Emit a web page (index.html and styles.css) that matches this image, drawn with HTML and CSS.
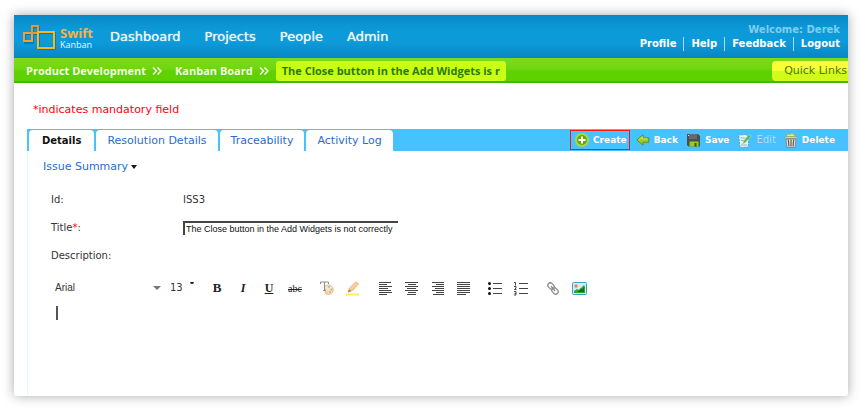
FILE: index.html
```html
<!DOCTYPE html>
<html lang="en">
<head>
<meta charset="utf-8">
<title>Swift Kanban</title>
<link rel="stylesheet" href="styles.css">
</head>
<body>
<div class="window">
  <header class="header">
    <a class="logo" href="#">
      <svg class="logo-mark" width="34" height="26" viewBox="0 0 34 26" fill="none" stroke-width="2">
        <g stroke="#06679f" opacity=".6"><path d="M3 10h8v9H3zM11 3h6v7h-6zM17 9h16v16H17z"/></g>
        <path d="M2 9h8v8H2z" stroke="#f3a02c"/>
        <path d="M10 2h6v7h-6z" stroke="#e9962f"/>
        <path d="M16 8h16v16H16z" stroke="#fbb617"/>
      </svg>
      <span class="logo-text"><b>Swift</b><span>Kanban</span></span>
    </a>
    <nav class="nav"><a href="#">Dashboard</a><a href="#">Projects</a><a href="#">People</a><a href="#">Admin</a></nav>
    <div class="account">
      <span class="welcome">Welcome: Derek</span>
      <div class="account-links"><a href="#">Profile</a><a href="#">Help</a><a href="#">Feedback</a><a href="#">Logout</a></div>
    </div>
  </header>

  <div class="crumbs">
    <a href="#">Product Development</a>
    <svg class="chevrons" width="10" height="8" viewBox="0 0 10 8"><path d="M1 .5 4.500 4 1 7.500M5.500 .5 9 4 5.500 7.500"/></svg>
    <a href="#">Kanban Board</a>
    <svg class="chevrons" width="10" height="8" viewBox="0 0 10 8"><path d="M1 .5 4.500 4 1 7.500M5.500 .5 9 4 5.500 7.500"/></svg>
    <span class="current">The Close button in the Add Widgets is r</span>
    <button class="quick" type="button">Quick Links</button>
  </div>

  <main class="main">
    <p class="mandatory">*indicates mandatory field</p>
    <div class="bar">
      <nav class="tabs"><a class="tab active" href="#">Details</a><a class="tab" href="#">Resolution Details</a><a class="tab" href="#">Traceability</a><a class="tab" href="#">Activity Log</a></nav>
      <div class="actions">
        <button class="action create" type="button">
          <svg width="14" height="14" viewBox="0 0 14 14"><circle cx="7" cy="7" r="7" fill="#a8d840"/><circle cx="7" cy="7" r="5" fill="#66a80c"/><path d="M7 3.500v7M3.500 7h7" stroke="#fff" stroke-width="2"/></svg>Create</button>
        <button class="action" type="button">
          <svg width="14" height="14" viewBox="0 0 16 14"><path d="M1 7 8 1v3.500h6.500v5H8V13z" fill="#9fce1c" stroke="#5f8422"/><path d="M3 7 7.200 3.400v2.400H13" fill="none" stroke="#d5ee6a"/></svg>Back</button>
        <button class="action" type="button">
          <svg width="15" height="14" viewBox="0 0 15 14"><path d="M1 1h11l2 2v10.500H2.500L1 12z" fill="#4b4e54"/><path d="M3 1h8v5H3z" fill="#66696f"/><path d="M2 2h1v1H2z" fill="#ddd"/><path d="M3.500 8.500h9v5h-9z" fill="#8fd11b"/><path d="M8.500 10h2v3.500h-2z" fill="#395019"/></svg>Save</button>
        <button class="action" type="button" disabled>
          <svg width="15" height="15" viewBox="0 0 15 15"><path d="M1.500 2 9 1.500l2.500 3V14L3 14.500z" fill="#e4f3f8" stroke="#5e9fb8" stroke-dasharray="2 1"/><path d="M3.500 5h5M4 7.500h3M4 12h6" stroke="#84bacd"/><path d="M5.500 11 7 7.500l5-6 2 1.500-5.500 6.500z" fill="#65ad5c" stroke="#b9e2b2" stroke-width=".6"/></svg>Edit</button>
        <button class="action" type="button">
          <svg width="14" height="15" viewBox="0 0 14 15"><path d="M2.500 3.500 4 1l2 .8L8 .5l2 1.500 1.500 1.500z" fill="#eef27a" stroke="#aab63c" stroke-width=".6"/><path d="M1 4h12v1.500H1z" fill="#f2edbd" stroke="#8a8760" stroke-width=".5"/><path d="M2 6h10l-1 8.500H3z" fill="#e9e4dc" stroke="#75706b" stroke-width=".7"/><path d="M4.300 6.500 5 13.500M7 6.500v7M9.700 6.500 9 13.500" stroke="#605850" stroke-width="1.200"/></svg>Delete</button>
      </div>
    </div>

    <form class="panel">
      <button class="summary" type="button">Issue Summary <span class="caret"></span></button>
      <div class="fields">
        <span>Id:</span><output>ISS3</output>
        <label for="title">Title<em>*</em>:</label><input id="title" type="text" value="The Close button in the Add Widgets is not correctly">
        <label for="description">Description:</label>
      </div>
      <div class="toolbar">
        <span class="pick"><select class="face" aria-label="Font"><option>Arial</option></select></span>
        <select class="size" aria-label="Font size"><option>13</option></select>
        <span class="tick"></span>
        <div class="group">
          <button type="button" class="glyph bold">B</button><button type="button" class="glyph italic">I</button><button type="button" class="glyph under">U</button><button type="button" class="glyph strike">abc</button>
        </div>
        <div class="group">
          <button type="button" aria-label="Text colour"><svg width="14" height="14" viewBox="0 0 14 14"><path d="M5 5.500C8 2 13.500 5 13.300 9c-.2 4-5 5.500-7.500 3.500-1.800-1.500.5-2.500-.5-4S4 7 5 5.500z" fill="#f8e3c4" stroke="#d6ac82" stroke-width=".8"/><circle cx="9" cy="6" r="1.100" fill="#91c7e8"/><circle cx="11.500" cy="8.500" r="1.100" fill="#8ecf84"/><circle cx="10" cy="11" r="1.100" fill="#ee9d89"/><circle cx="7.200" cy="11.500" r="1" fill="#f1cd58"/><path d="M.5 3V1h8v2M4.500 1v8.500M3 9.500h3" fill="none" stroke="#8c8c8c"/></svg></button><button type="button" aria-label="Highlight"><svg width="14" height="15" viewBox="0 0 14 15"><path d="M0 12.500h13v2H0z" fill="#fcee62"/><path d="m2 11 1.500-4L10 .8l2.500 2L6.500 9.500z" fill="#f9cf9f" stroke="#e0a571" stroke-width=".8"/><path d="m2 11.500 1.200-3 2.300 1.600z" fill="#b78152"/></svg></button>
        </div>
        <div class="group">
          <button type="button" aria-label="Align left"><svg class="lines" width="13" height="15" viewBox="0 0 13 15"><path d="M0 1.500h12M0 3.500h8M0 5.500h13M0 7.500h9M0 9.500h12M0 11.500h13M0 13.500h8"/></svg></button><button type="button" aria-label="Centre"><svg class="lines" width="13" height="15" viewBox="0 0 13 15"><path d="M0 1.500h13M3 3.500h8M0 5.500h13M2 7.500h9M0 9.500h13M3 11.500h8M2 13.500h9"/></svg></button><button type="button" aria-label="Align right"><svg class="lines" width="13" height="15" viewBox="0 0 13 15"><path d="M1 1.500h12M5 3.500h8M1 5.500h12M4 7.500h9M1 9.500h12M5 11.500h8M2 13.500h11"/></svg></button><button type="button" aria-label="Justify"><svg class="lines" width="13" height="15" viewBox="0 0 13 15"><path d="M0 1.500h13M0 3.500h13M0 5.500h13M0 7.500h13M0 9.500h13M0 11.500h13M0 13.500h9"/></svg></button>
        </div>
        <div class="group">
          <button type="button" aria-label="Bulleted list"><svg class="lines" width="14" height="14" viewBox="0 0 14 14"><path d="M5 2.500h9M5 7.500h9M5 12.500h9"/><g fill="#111" stroke="none"><circle cx="1.500" cy="2.500" r="1.500"/><circle cx="1.500" cy="7.500" r="1.500"/><circle cx="1.500" cy="12.500" r="1.500"/></g></svg></button><button type="button" aria-label="Numbered list"><svg class="lines" width="14" height="15" viewBox="0 0 14 15"><path d="M5 2.500h9M5 7.500h9M5 12.500h9"/><path d="M0 1.500h1.500v3M0 5.500h2v1.500l-1.500 1.500h2M0 10.500h2v3.500H0M.5 12.500H2" fill="none"/></svg></button>
        </div>
        <div class="group">
          <button type="button" aria-label="Link"><svg width="12" height="13" viewBox="0 0 12 13" fill="none" stroke="#8d8d8d" stroke-width="1.300"><rect x="-2.500" y="-3.500" width="5" height="7" rx="2.500" transform="translate(4 4) rotate(-42)"/><rect x="-2.500" y="-3.500" width="5" height="7" rx="2.500" transform="translate(8 9) rotate(-42)"/><path d="m4 4 4 5"/></svg></button><button type="button" aria-label="Image"><svg width="15" height="13" viewBox="0 0 15 13"><rect x=".5" y=".5" width="14" height="12" rx="1" fill="#c8f2fb" stroke="#3d9fd0"/><path d="M2 11V9l3-2 2 1 5-5 1 2v6z" fill="#36a51f"/><path d="m6 10 3-4 1 2 2-3v5z" fill="#156c17"/><circle cx="4" cy="4" r="1.700" fill="#f48433"/></svg></button>
        </div>
      </div>
      <div class="editor"><textarea id="description"></textarea><span class="cursor"></span></div>
    </form>
  </main>
</div>
</body>
</html>
```
FILE: styles.css
```css
* { box-sizing: border-box; }
body {
  margin: 0;
  min-height: 100vh;
  padding: 15px 18px 16px 14px;
  display: flex;
  background: #fff;
  font: 10px/14px "DejaVu Sans", sans-serif;
  color: #333;
}
a { color: inherit; text-decoration: none; }
button { border: 0; padding: 0; background: none; font: inherit; color: inherit; }
svg { display: block; flex: none; }

.window {
  flex: 1;
  min-width: 0;
  display: flex;
  flex-direction: column;
  background: #fff;
  border-radius: 0 0 3px 3px;
  box-shadow: 0 0 12px rgba(0, 0, 0, .35);
}

.header {
  display: flex;
  align-items: center;
  height: 43px;
  padding: 0 8px;
  color: #e8f7ff;
  background: linear-gradient(#0789c8, #0d9ad8 35%, #0d9ad8 65%, #0785c4);
}
.logo { display: flex; align-items: center; gap: 4px; width: 88px; }
.logo-text { display: flex; flex-direction: column; padding-top: 2px; font: 9px/10px "Lato", sans-serif; }
.logo-text span { font-family: "Open Sans", sans-serif; }
.logo-text b { font: bold 13px/14px "Open Sans", sans-serif; color: #fbb040; }
.nav { display: flex; gap: 24px; font-size: 13px; text-shadow: 0 0 1px #e8f7ff; }
.account { margin-left: auto; text-align: right; font-weight: bold; }
.welcome { color: #7fcdf0; }
.account-links { display: flex; justify-content: flex-end; color: #fff; }
.account-links a + a { margin-left: 7px; padding-left: 7px; border-left: 1px solid #a9dcf3; }

.crumbs {
  display: flex;
  align-items: center;
  gap: 6px;
  height: 25px;
  padding-left: 12px;
  color: #f4ffe4;
  font: bold 11px/20px "Open Sans", sans-serif;
  background: linear-gradient(#7ddb1c, #6fd60e 45%, #5fd000 55%, #5fd000 90%, #46b800 92%);
}
.chevrons { margin-right: 7px; fill: none; stroke: #f4ffe4; stroke-width: 1.5; }
.chevrons + .current { margin-left: -6px; }
.current {
  width: 230px;
  height: 20px;
  padding: 0 6px;
  overflow: hidden;
  white-space: nowrap;
  border-radius: 3px;
  color: #2d7a00;
  background: #c8ff14;
}
.quick {
  margin-left: auto;
  height: 20px;
  padding: 0 1px 0 12px;
  border-radius: 4px 0 0 4px;
  color: #4a7a00;
  font: 11px "DejaVu Sans", sans-serif;
  background: linear-gradient(#f8ff35 50%, #d2fb18 50%);
}

.main { flex: 1; display: flex; flex-direction: column; padding-left: 13px; }
.mandatory { margin: 20px 0 12px 6px; color: #f00; font-size: 11px; }
.bar {
  display: flex;
  justify-content: space-between;
  height: 22px;
  background: #45c2ff;
}
.tabs { display: flex; gap: 2px; padding: 1px 0 0 2px; font-size: 11px; }
.tab {
  padding: 0 11px;
  line-height: 21px;
  white-space: nowrap;
  border-radius: 4px 4px 0 0;
  color: #2a6bd0;
  background: #fff;
}
.active { padding: 0 13px; color: #111; font-size: 10px; font-weight: bold; }
.actions { display: flex; align-items: center; padding-right: 13px; color: #fff; font-size: 9px; font-weight: bold; }
.action { display: flex; align-items: center; gap: 4px; height: 20px; margin-left: 8px; white-space: nowrap; }
.action:disabled { color: #b4dcf0; font-size: 10px; font-weight: normal; }
.create { padding: 0 2px 0 4px; border: 1px solid #f01818; }
.create + .action { margin-left: 6px; }

.panel { flex: 1; border-left: 1px solid #dffcff; padding: 9px 0 0 15px; }
.summary { display: flex; align-items: center; gap: 3px; color: #2a6bd0; font-size: 11px; }
.caret { border: 3px solid transparent; border-top: 4px solid #111; border-bottom: 0; }
.fields {
  display: grid;
  grid-template-columns: 132px 215px;
  grid-template-rows: 14px 14px 14px;
  row-gap: 14px;
  padding: 19px 0 0 8px;
}
.fields em { color: #f00; font-style: normal; }
.fields input {
  height: 14px;
  margin: 0;
  padding: 0 0 0 1px;
  border: solid #444;
  border-width: 2px 0 0 2px;
  color: #111;
  font: 9px "Liberation Sans", sans-serif;
}

.toolbar { display: flex; align-items: center; gap: 6px; height: 26px; margin-top: 12px; }
.toolbar select { appearance: none; border: 0; padding: 0; margin: 0; background: none; color: #333; font: inherit; }
.pick { position: relative; margin-left: 12px; }
.pick::after { content: ""; position: absolute; right: 0; top: 5px; border: 4px solid transparent; border-top: 4px solid #777; border-bottom: 0; }
.toolbar .face { width: 106px; font-family: "Liberation Sans", sans-serif; }
.toolbar .size { margin-left: 3px; }
.tick { width: 4px; height: 2px; margin: 0 4px 10px 1px; border-radius: 0 0 2px 2px; background: #222; }
.group { display: flex; }
.group button { width: 26px; height: 20px; display: flex; align-items: center; justify-content: center; }
.group .glyph { color: #222; font: 12px "Liberation Serif", serif; }
.group .bold { font-weight: bold; font-size: 13px; }
.group .italic { font-style: italic; font-weight: bold; }
.group .under { text-decoration: underline; font-weight: bold; }
.group .strike { text-decoration: line-through; font-size: 10px; }
.lines { fill: none; stroke: #444; }

.editor { position: relative; }
.editor textarea { display: block; width: 100%; height: 60px; border: 0; padding: 4px 14px; outline: 0; resize: none; background: none; font: inherit; }
.cursor { position: absolute; left: 13px; top: 5px; width: 2px; height: 14px; background: #555; }
```
